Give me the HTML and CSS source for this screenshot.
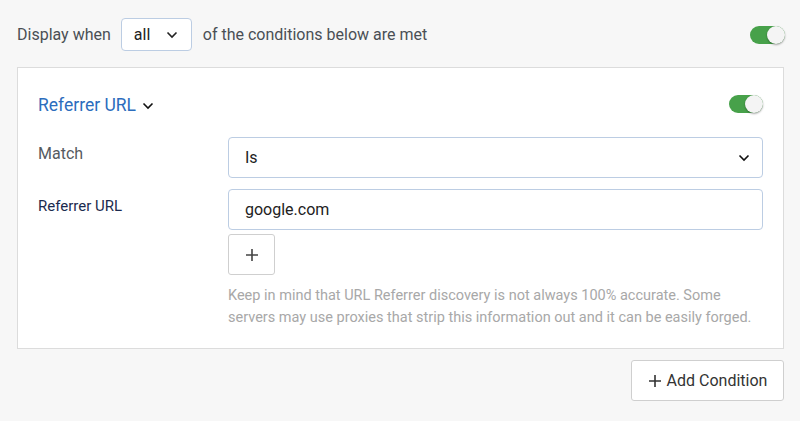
FILE: index.html
```html
<!DOCTYPE html>
<html>
<head>
<meta charset="utf-8">
<link rel="stylesheet" href="styles.css">
</head>
<body>
<div class="page">
  <div class="top-row">
    <div class="top-left">
      <span class="top-text">Display when</span>
      <div class="mini-select">
        <span>all</span>
        <svg class="chev" width="12" height="8" viewBox="0 0 12 8"><polyline points="1.5,1.5 6,6 10.5,1.5" fill="none" stroke="#222" stroke-width="1.6"/></svg>
      </div>
      <span class="top-text">of the conditions below are met</span>
    </div>
    <div class="toggle toggle-lg"><div class="knob"></div></div>
  </div>

  <div class="card">
    <div class="card-head">
      <div class="cond-title">
        <span>Referrer URL</span>
        <svg class="chev" width="12" height="8" viewBox="0 0 12 8"><polyline points="1.5,1.5 6,6 10.5,1.5" fill="none" stroke="#111" stroke-width="1.6"/></svg>
      </div>
      <div class="toggle"><div class="knob"></div></div>
    </div>

    <div class="form-grid">
      <div class="lbl lbl-match">Match</div>
      <div class="field select-field">
        <span>Is</span>
        <svg class="chev" width="12" height="8" viewBox="0 0 12 8"><polyline points="1.5,1.5 6,6 10.5,1.5" fill="none" stroke="#111" stroke-width="1.6"/></svg>
      </div>

      <div class="lbl lbl-url">Referrer URL</div>
      <div class="url-col">
        <div class="field input-field">google.com</div>
        <div class="plus-btn">
          <svg width="14" height="14" viewBox="0 0 14 14"><path d="M7 1v12M1 7h12" stroke="#444" stroke-width="1.6" fill="none"/></svg>
        </div>
        <p class="help">Keep in mind that URL Referrer discovery is not always 100% accurate. Some servers may use proxies that strip this information out and it can be easily forged.</p>
      </div>
    </div>
  </div>

  <div class="actions">
    <div class="add-btn">
      <svg width="14" height="14" viewBox="0 0 14 14"><path d="M7 1v12M1 7h12" stroke="#333" stroke-width="1.6" fill="none"/></svg>
      <span>Add Condition</span>
    </div>
  </div>
</div>
</body>
</html>
```

FILE: styles.css
```css
html, body {
  margin: 0;
  padding: 0;
  background: #f7f7f7;
  font-family: Roboto, "Liberation Sans", sans-serif;
}

.page {
  padding: 18px 16px 0 17px;
}

.top-row {
  display: flex;
  align-items: center;
  justify-content: space-between;
  height: 33px;
}

.top-left {
  display: flex;
  align-items: center;
}

.top-text {
  font-size: 16px;
  color: #4a4f55;
}

.mini-select {
  box-sizing: border-box;
  width: 71px;
  height: 33px;
  margin: 0 11px 0 10px;
  border: 1px solid #bccde3;
  border-radius: 4px;
  background: #fff;
  display: flex;
  align-items: center;
  justify-content: space-between;
  padding: 0 13px 0 12px;
  font-size: 16px;
  color: #222;
}

.toggle {
  box-sizing: border-box;
  position: relative;
  width: 34px;
  height: 18px;
  border-radius: 9px;
  background: #47a14a;
}

.toggle-lg {
  width: 35px;
  margin-right: -1px;
}

.knob {
  position: absolute;
  right: 0;
  top: 0;
  width: 18px;
  height: 18px;
  border-radius: 50%;
  background: #f4f4f4;
  box-shadow: 0 1px 2px rgba(0,0,0,0.35);
}

.card {
  margin-top: 16px;
  background: #fff;
  border: 1px solid #dcdcdc;
  padding: 25px 20px 19px 20px;
}

.card-head {
  display: flex;
  align-items: center;
  justify-content: space-between;
  height: 24px;
}

.cond-title {
  display: flex;
  align-items: center;
  gap: 6px;
  font-size: 17.5px;
  color: #2c6dbd;
}

.cond-title .chev {
  margin-top: 2px;
}

.card-head .toggle {
  margin-top: -2px;
}

.form-grid {
  display: grid;
  grid-template-columns: 190px 1fr;
  row-gap: 11px;
  margin-top: 20px;
}

.lbl {
  font-size: 16px;
  line-height: 20px;
}

.lbl-match {
  color: #555a60;
  padding-top: 7px;
}

.lbl-url {
  color: #1b2a4e;
  font-size: 15px;
  padding-top: 7px;
}

.field {
  box-sizing: border-box;
  height: 41px;
  background: #fff;
  border: 1px solid #bccde3;
  border-radius: 4px;
  display: flex;
  align-items: center;
  padding: 0 12px 0 16px;
  font-size: 16px;
  color: #222;
}

.select-field {
  justify-content: space-between;
}

.url-col {
  display: flex;
  flex-direction: column;
  align-items: flex-start;
}

.input-field {
  width: 100%;
}

.plus-btn {
  box-sizing: border-box;
  margin-top: 4px;
  width: 47px;
  height: 41px;
  border: 1px solid #cfcfcf;
  border-radius: 3px;
  background: #fff;
  display: flex;
  align-items: center;
  justify-content: center;
}

.help {
  margin: 10px 0 0 0;
  font-size: 14.5px;
  line-height: 22px;
  color: #a8a8a8;
  padding-right: 4px;
}

.actions {
  display: flex;
  justify-content: flex-end;
  margin-top: 11px;
}

.add-btn {
  box-sizing: border-box;
  width: 153px;
  height: 41px;
  border: 1px solid #cfcfcf;
  border-radius: 3px;
  background: #fff;
  display: flex;
  align-items: center;
  justify-content: center;
  gap: 5px;
  font-size: 16px;
  color: #333;
}
```
